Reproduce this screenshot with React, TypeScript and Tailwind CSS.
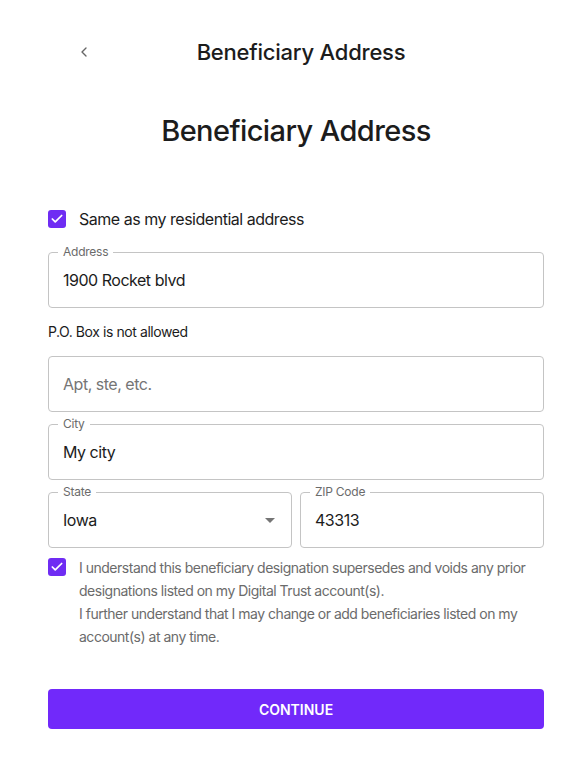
import { Check, ChevronLeft } from 'lucide-react';

const font = { fontFamily: 'Inter, "Liberation Sans", sans-serif' };

function OutlinedField({
  label,
  value,
  placeholder,
  select,
  className = '',
}: {
  label?: string;
  value?: string;
  placeholder?: string;
  select?: boolean;
  className?: string;
}) {
  return (
    <div
      className={`relative flex h-[56px] items-center rounded-[4px] border border-[#c4c4c4] px-[14px] ${className}`}
    >
      {label && (
        <span className="absolute -top-[8px] left-[9px] bg-white px-[5px] text-[12px] leading-[14px] tracking-[-0.02em] text-[#6b6b6b]">
          {label}
        </span>
      )}
      {value ? (
        <span className="flex-1 text-[16px] tracking-[-0.03em] text-[#1c1c1c]">{value}</span>
      ) : (
        <span className="flex-1 text-[16px] tracking-[-0.03em] text-[#757575]">{placeholder}</span>
      )}
      {select && (
        <svg width="10" height="5" viewBox="0 0 10 5" className="mr-[2px]">
          <path d="M0 0 L10 0 L5 5 Z" fill="#757575" />
        </svg>
      )}
    </div>
  );
}

function Checkbox() {
  return (
    <div className="flex h-[18px] w-[18px] shrink-0 items-center justify-center rounded-[3px] bg-[#6f2cf3]">
      <Check className="h-[14px] w-[14px] text-white" strokeWidth={3} />
    </div>
  );
}

export default function App() {
  return (
    <div className="min-h-[772px] w-[580px] bg-white" style={font}>
      <div className="ml-[48px] w-[496px]">
        {/* top bar */}
        <div className="relative mt-[28px] flex h-[48px] items-center justify-center">
          <ChevronLeft className="absolute left-[28px] h-[16px] w-[16px] text-[#666]" strokeWidth={2} />
          <span className="ml-[10px] text-[22px] font-medium tracking-[-0.01em] text-[#1c1c1c]">
            Beneficiary Address
          </span>
        </div>

        <h1 className="mt-[32px] text-center text-[29px] font-medium leading-[46px] tracking-[-0.02em] text-[#1c1c1c]">
          Beneficiary Address
        </h1>

        <div className="mt-[53px] flex items-center gap-[13px]">
          <Checkbox />
          <span className="text-[16px] tracking-[-0.03em] text-[#1c1c1c]">Same as my residential address</span>
        </div>

        <OutlinedField className="mt-[21px]" label="Address" value="1900 Rocket blvd" />

        <p className="mt-[14px] text-[14px] leading-[20px] tracking-[-0.03em] text-[#1c1c1c]">
          P.O. Box is not allowed
        </p>

        <OutlinedField className="mt-[14px]" placeholder="Apt, ste, etc." />

        <OutlinedField className="mt-[12px]" label="City" value="My city" />

        <div className="mt-[12px] grid grid-cols-2 gap-[8px]">
          <OutlinedField label="State" value="Iowa" select />
          <OutlinedField label="ZIP Code" value="43313" />
        </div>

        <div className="mt-[8px] flex gap-[13px]">
          <div className="pt-[2px]">
            <Checkbox />
          </div>
          <p className="text-[14px] leading-[23px] tracking-[-0.035em] text-[#6b6b6b]">
            I understand this beneficiary designation supersedes and voids any prior designations listed on my
            Digital Trust account(s).
            <br />
            I further understand that I may change or add beneficiaries listed on my account(s) at any time.
          </p>
        </div>

        <button className="mt-[41px] flex h-[40px] w-full items-center justify-center rounded-[4px] bg-[#7129fa] text-[14px] font-semibold text-white">
          CONTINUE
        </button>
      </div>
    </div>
  );
}
